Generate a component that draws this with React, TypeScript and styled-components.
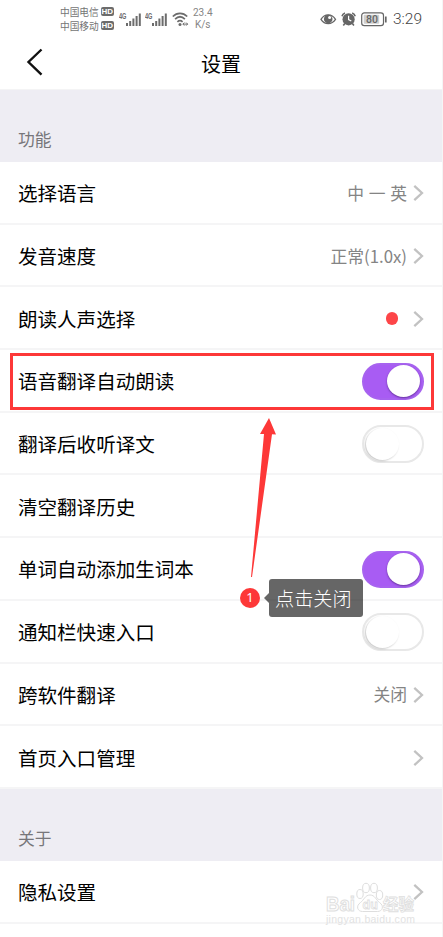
import React from "react";
import styled, { createGlobalStyle } from "styled-components";

const GlobalStyle = createGlobalStyle`
  * { box-sizing: border-box; }
  body {
    margin: 0;
    background: #fff;
    font-family: "Noto Sans", "Noto Sans CJK SC", sans-serif;
  }
`;

const Screen = styled.div`
  position: relative;
  width: 443px;
  height: 937px;
  overflow: hidden;
  background: #fff;
  border-right: 1px solid #f5f5f5;
`;

const StatusBar = styled.div`
  display: flex;
  justify-content: space-between;
  height: 37px;
  padding: 0 20px 0 60px;
  color: #747474;
`;

const StatusGroup = styled.div`
  display: flex;
  align-items: center;
`;

const Carriers = styled.div`
  display: grid;
  grid-template-rows: 14px 14px;
  width: 55px;
`;

const Carrier = styled.div`
  display: flex;
  align-items: center;
  gap: 2px;
  font-family: "Noto Sans CJK SC", sans-serif;
  font-size: 9.7px;
  line-height: 14px;
  white-space: nowrap;
`;

const HdBadge = styled.span`
  width: 13px;
  height: 9px;
  border-radius: 2px;
  background: #6c6c6c;
  color: #fff;
  font: bold 8px/9px "Liberation Sans", sans-serif;
  text-align: center;
`;

const Speed = styled.div`
  margin-left: 4px;
  font: 10px/11.5px Roboto, sans-serif;
  color: #858585;
  text-align: center;
`;

const Clock = styled.span`
  margin-left: 5px;
  font: 300 15.5px/20px Roboto, sans-serif;
  color: #444;
`;

const Header = styled.header`
  display: grid;
  grid-template-columns: 60px 1fr 60px;
  align-items: center;
  height: 53px;
  border-bottom: 1px solid #f4f4f5;
`;

const BackButton = styled.button`
  display: flex;
  padding: 0 0 2px 26px;
  border: 0;
  background: none;
`;

const Title = styled.h1`
  margin: 0;
  padding-top: 1px;
  font: 400 20px/28px "Noto Sans CJK SC", sans-serif;
  text-align: center;
  color: #000;
`;

const SectionTitle = styled.div`
  height: 72px;
  padding: 37px 18px 0;
  background: #eeedf3;
  color: #77767a;
  font: 16.8px/25px "Noto Sans CJK SC", sans-serif;
`;

const Row = styled.div`
  display: flex;
  align-items: center;
  justify-content: space-between;
  height: 62.7px;
  padding: 2px 18px 0;
  border-bottom: 2px solid #f5f5f6;
`;

const Label = styled.span`
  font: 19.55px/28px "Noto Sans CJK SC", sans-serif;
  color: #000;
`;

const Trailing = styled.div`
  display: flex;
  align-items: center;
  gap: 6px;
`;

const Value = styled.span`
  color: #848484;
  font: 16.8px/25px "Noto Sans CJK SC", sans-serif;
  word-spacing: 1px;
`;

const Dot = styled.span`
  width: 12.5px;
  height: 12.5px;
  margin-right: 9px;
  border-radius: 50%;
  background: #fd4548;
`;

const Switch = styled.span<{ $on: boolean }>`
  display: flex;
  align-items: center;
  justify-content: ${(p) => (p.$on ? "flex-end" : "flex-start")};
  width: 62px;
  height: 37.5px;
  padding: 0 ${(p) => (p.$on ? "2px" : "0")};
  border: 2px solid ${(p) => (p.$on ? "#a763ef" : "#e8e8e8")};
  border-radius: 19px;
  background: ${(p) => (p.$on ? "#a85cf3" : "#fff")};
`;

const Knob = styled.span<{ $on: boolean }>`
  width: 33px;
  height: 32px;
  margin-left: ${(p) => (p.$on ? "0" : "2px")};
  border-radius: 50%;
  background: #fff;
  box-shadow: ${(p) => (p.$on ? "0 1px 2px rgba(50, 20, 90, 0.55)" : "-1px 1px 2px rgba(0, 0, 0, 0.22)")};
`;

const Highlight = styled.div`
  position: absolute;
  left: 10px;
  top: 353px;
  width: 424px;
  height: 57px;
  border: 3px solid #fd3838;
`;

const Arrow = styled.svg`
  position: absolute;
  left: 248px;
  top: 417px;
`;

const Callout = styled.div`
  position: absolute;
  left: 240px;
  top: 579px;
  display: flex;
  align-items: center;
`;

const StepNumber = styled.span`
  width: 20px;
  height: 20px;
  border-radius: 50%;
  background: #fd3838;
  color: #fff;
  font: 13px/19px "Noto Sans", sans-serif;
  text-align: center;
`;

const Pointer = styled.span`
  margin-left: 4px;
  border: 5px solid transparent;
  border-left: 0;
  border-right-color: rgba(0, 0, 0, 0.6);
`;

const Tip = styled.span`
  width: 94px;
  height: 38px;
  padding-left: 6px;
  border-radius: 3px;
  background: rgba(0, 0, 0, 0.6);
  color: #fff;
  font: 300 19.2px/38px "Noto Sans CJK SC", sans-serif;
  white-space: nowrap;
`;

const Watermark = styled.svg`
  position: absolute;
  left: 323px;
  top: 880px;
`;

const Chevron = () => (
  <svg width="11" height="18" viewBox="0 0 11 18" fill="none">
    <path d="M1.3 1.8 9 9 1.3 16.2" stroke="#c2c2c2" strokeWidth="2.3" />
  </svg>
);

const Signal = () => (
  <svg width="24" height="18" viewBox="0 0 24 18" fill="#6c6c6c">
    <text x="0" y="9" fontSize="9" fontWeight="700" textLength="7.5" lengthAdjust="spacingAndGlyphs" fontFamily="Liberation Sans">4G</text>
    <path d="M7 13h2v3H7zM10.200 11h2v5h-2zM13.400 8.500h2V16h-2zM16.600 6h2v10h-2zM19.800 3.500h2V16h-2z" />
  </svg>
);

const Wifi = () => (
  <svg width="17" height="16" viewBox="0 0 17 16" fill="none" stroke="#6c6c6c" strokeWidth="1.7">
    <path d="M.8 5.5C5 1.2 11 1.2 15.2 5.5M3.1 8.1c3-2.9 6.800-2.900 9.800 0M5.400 10.800c1.600-1.500 3.600-1.500 5.200 0" />
    <circle cx="8" cy="13.400" r="1.500" fill="#6c6c6c" stroke="none" />
    <path d="m12.300 11.600-1.500 1.500 1.500 1.500m1.900-3 1.500 1.500-1.500 1.500M11 13.100h4.500" strokeWidth="1" />
  </svg>
);

const StatusIcons = () => (
  <svg width="68" height="18" viewBox="0 0 68 18" fill="none" stroke="#666">
    <path d="M1 9.3C4.6 3.4 11.8 3.4 15.5 9.3 11.8 14.9 4.6 14.9 1 9.3z" strokeWidth="1.3" />
    <circle cx="8.2" cy="9" r="4.3" fill="#666" stroke="none" />
    <circle cx="9.600" cy="7.400" r="1.500" fill="#fff" stroke="none" />
    <circle cx="28.600" cy="9.300" r="6.100" fill="#666" stroke="none" />
    <path d="M22 6.200c.4-1.600 1.400-2.700 3-3.200M32.200 3c1.600.5 2.600 1.600 3 3.200M24.800 13.600l-1.500 2M32.400 13.600l1.500 2" strokeWidth="1.6" />
    <path d="M28.600 5.800v3.800l2.700 1.500" stroke="#fff" strokeWidth="1.2" />
    <rect x="41.700" y="2.900" width="21.800" height="12.800" rx="2.600" strokeWidth="1.2" />
    <rect x="43.700" y="4.800" width="15.500" height="9" rx="1" fill="#cfcfcf" stroke="none" />
    <path d="M65.800 6.500v6" strokeWidth="1.7" />
    <text x="46" y="13.100" fill="#666" stroke="none" fontSize="10.5" fontWeight="500" fontFamily="Roboto">80</text>
  </svg>
);

type Setting = {
  label: string;
  value?: string;
  dot?: boolean;
  on?: boolean;
  plain?: boolean;
};

const settings: Setting[] = [
  { label: "选择语言", value: "中 一 英" },
  { label: "发音速度", value: "正常(1.0x)" },
  { label: "朗读人声选择", dot: true },
  { label: "语音翻译自动朗读", on: true },
  { label: "翻译后收听译文", on: false },
  { label: "清空翻译历史", plain: true },
  { label: "单词自动添加生词本", on: true },
  { label: "通知栏快速入口", on: false },
  { label: "跨软件翻译", value: "关闭" },
  { label: "首页入口管理" },
];

const SettingRow = ({ label, value, dot, on, plain }: Setting) => (
  <Row>
    <Label>{label}</Label>
    <Trailing>
      {value && <Value>{value}</Value>}
      {dot && <Dot />}
      {on !== undefined ? (
        <Switch $on={on}>
          <Knob $on={on} />
        </Switch>
      ) : (
        !plain && <Chevron />
      )}
    </Trailing>
  </Row>
);

export default function App() {
  return (
    <>
      <GlobalStyle />
      <Screen>
        <StatusBar>
          <StatusGroup>
            <Carriers>
              <Carrier>中国电信<HdBadge>HD</HdBadge></Carrier>
              <Carrier>中国移动<HdBadge>HD</HdBadge></Carrier>
            </Carriers>
            <svg width="4" height="1" />
            <Signal />
            <svg width="2" height="1" />
            <Signal />
            <svg width="3" height="1" />
            <Wifi />
            <Speed>23.4<br />K/s</Speed>
          </StatusGroup>
          <StatusGroup>
            <StatusIcons />
            <Clock>3:29</Clock>
          </StatusGroup>
        </StatusBar>
        <Header>
          <BackButton aria-label="返回">
            <svg width="18" height="28" viewBox="0 0 18 28" fill="none">
              <path d="M15.500 1.500 2.500 14l13 12.700" stroke="#111" strokeWidth="2.4" />
            </svg>
          </BackButton>
          <Title>设置</Title>
        </Header>
        <SectionTitle>功能</SectionTitle>
        {settings.map((s) => (
          <SettingRow key={s.label} {...s} />
        ))}
        <SectionTitle>关于</SectionTitle>
        <SettingRow label="隐私设置" />
        <Highlight />
        <Arrow width="32" height="162" viewBox="0 0 32 162">
          <path d="M21 1 28 17.500 24 17.300 4 160H3L16 17 12 17z" fill="#fd3838" />
        </Arrow>
        <Callout>
          <StepNumber>1</StepNumber>
          <Pointer />
          <Tip>点击关闭</Tip>
        </Callout>
        <Watermark width="98" height="50" viewBox="0 0 98 50" fill="#fff" stroke="#dedede">
          <text x="3" y="31" fontSize="20" fontWeight="700" textLength="29" lengthAdjust="spacingAndGlyphs" fontFamily="Liberation Sans">Bai</text>
          <ellipse cx="37" cy="14" rx="3.2" ry="4.500" />
          <ellipse cx="43" cy="8" rx="3.400" ry="4.700" />
          <ellipse cx="51" cy="8" rx="3.400" ry="4.700" />
          <ellipse cx="56.500" cy="15" rx="3.200" ry="4.500" />
          <path d="M47 15c-5 0-6 5-9.500 7.500-5 3.500-3 9 2 9h15c5 0 7-5.500 2-9C53 20 52 15 47 15z" />
          <text x="39.500" y="29" fontSize="12.5" fontWeight="700" strokeWidth="0.8" fontFamily="Liberation Sans">du</text>
          <text x="60" y="30" fontSize="15.500" fontWeight="700" strokeWidth="0.8" fontFamily="Noto Sans CJK SC">经验</text>
          <text x="3" y="43" fontSize="10.500" stroke="none" fill="#e2e2e2" textLength="89" fontFamily="Liberation Sans">jingyan.baidu.com</text>
        </Watermark>
      </Screen>
    </>
  );
}
